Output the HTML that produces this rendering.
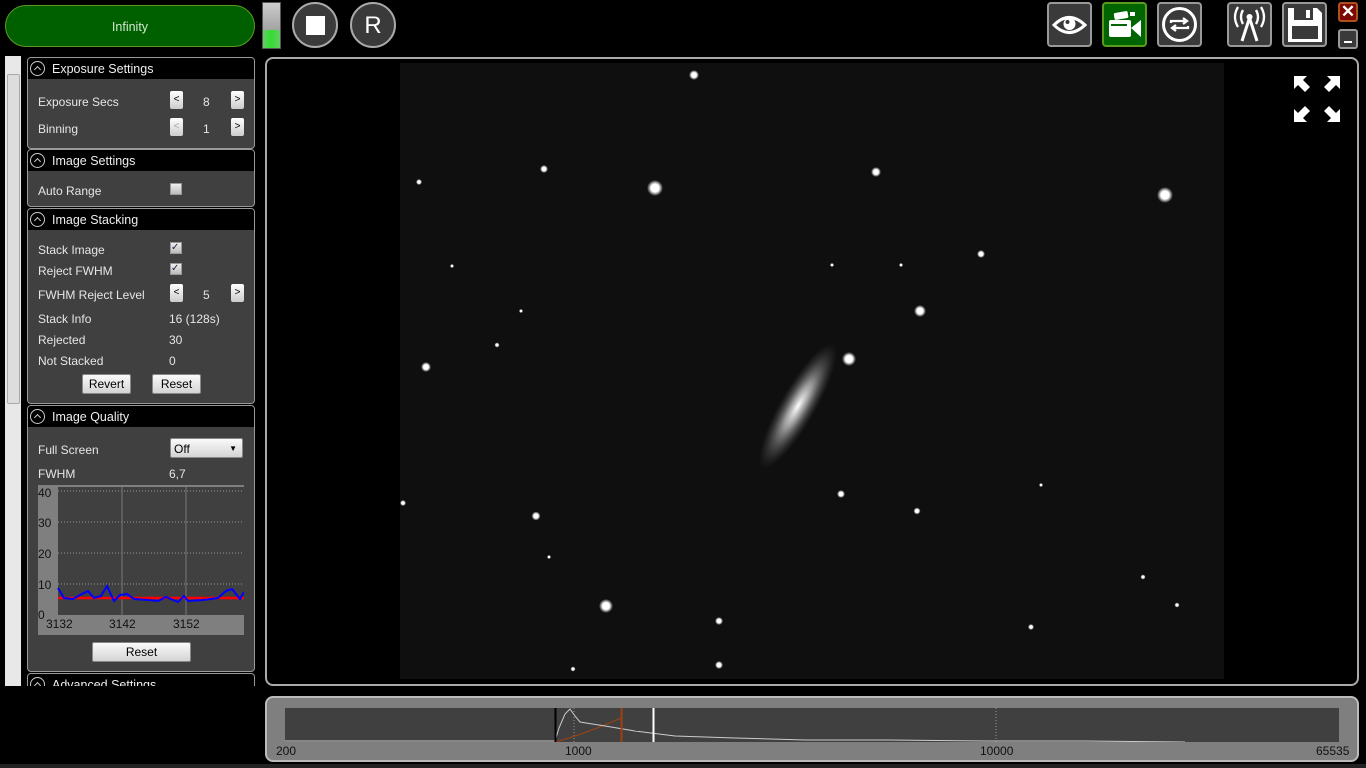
<!DOCTYPE html><html><head><style>
body{margin:0;width:1366px;height:768px;background:#000;position:relative;overflow:hidden;font-family:"Liberation Sans",sans-serif;font-size:12px;color:#ddd}
.a{position:absolute}
.hdr{position:absolute;left:0;width:226px;height:21px;background:#000;color:#eee;font-size:12.5px;line-height:22px}
.hdr i{position:absolute;left:2px;top:3px;width:15px;height:15px;border:1.3px solid #ccc;border-radius:50%;box-sizing:border-box}
.hdr i:after{content:"";position:absolute;left:4px;top:5px;width:4px;height:4px;border-left:1.3px solid #ccc;border-top:1.3px solid #ccc;transform:rotate(45deg)}
.hdr span{position:absolute;left:24px}
.sec{position:absolute;left:27px;width:228px;background:#404040;border:1px solid #999;border-radius:4px;box-sizing:border-box;overflow:hidden}
.l{position:absolute;left:10px;font-size:12px;color:#e6e6e6}
.btn{position:absolute;width:13px;height:18px;background:linear-gradient(#fff,#ccc);border-radius:2px;color:#000;font-size:10px;text-align:center;line-height:18px}
.pb{position:absolute;background:linear-gradient(#fafafa,#d4d4d4);border:1px solid #888;border-radius:2px;color:#000;text-align:center;font-size:12px}
.cb{position:absolute;width:10px;height:10px;border:1px solid #999;background:linear-gradient(#eee,#bbb)}
.tb{position:absolute;top:2px;width:45px;height:45px;border:2px solid #999;border-radius:4px;background:#3a3a3a;box-sizing:border-box}
</style></head><body>
<div class="a" style="left:5px;top:5px;width:248px;height:40px;border-radius:21px;background:#006000;border:1.5px solid #5a9a20;color:#cfe8cf;text-align:center;line-height:42px;font-size:12.5px">Infinity</div>
<div class="a" style="left:262px;top:2px;width:19px;height:47px;background:linear-gradient(#ccc,#888);border:1px solid #555;box-sizing:border-box"><div style="position:absolute;bottom:0;left:0;right:0;height:18px;background:linear-gradient(90deg,#6c6,#3d3,#6c6)"></div></div>
<div class="a" style="left:292px;top:2px;width:46px;height:46px;border-radius:50%;border:2px solid #aaa;background:#3a3a3a;box-sizing:border-box"><div style="position:absolute;left:12px;top:12px;width:19px;height:19px;background:#fff"></div></div>
<div class="a" style="left:350px;top:2px;width:46px;height:46px;border-radius:50%;border:2px solid #aaa;background:#3a3a3a;box-sizing:border-box;color:#fff;font-size:24px;text-align:center;line-height:44px">R</div>
<div class="tb" style="left:1047px"><svg width="41" height="41" viewBox="0 0 41 41"><path d="M5 21 Q20 6 36 21 Q20 36 5 21Z" fill="none" stroke="#fff" stroke-width="3"/><circle cx="20.5" cy="20" r="6" fill="#fff"/><circle cx="18.5" cy="18" r="2" fill="#3a3a3a"/></svg></div>
<div class="tb" style="left:1102px;background:#006400;border-color:#5a9a20"><svg width="41" height="41" viewBox="0 0 41 41"><rect x="5" y="16" width="22" height="17" rx="2" fill="#fff"/><rect x="10" y="8" width="14" height="7" rx="1.5" fill="#fff" transform="rotate(-10 17 11)"/><rect x="26" y="8" width="5" height="4" fill="#fff"/><path d="M27 24 L37 16 V33Z" fill="#fff"/><rect x="7" y="20" width="16" height="2" fill="#006400"/></svg></div>
<div class="tb" style="left:1157px"><svg width="41" height="41" viewBox="0 0 41 41"><circle cx="20.5" cy="20.5" r="16" fill="none" stroke="#fff" stroke-width="3"/><path d="M12 19 V17 H27 M24 14 L28 17 L24 20 M29 22 V24 H14 M17 21 L13 24 L17 27" fill="none" stroke="#fff" stroke-width="2.3"/></svg></div>
<div class="tb" style="left:1227px"><svg width="41" height="41" viewBox="0 0 41 41"><circle cx="20.5" cy="13" r="3" fill="#fff"/><path d="M20.5 14 L13 37 M20.5 14 L28 37" stroke="#fff" stroke-width="3"/><path d="M14 6 Q10 13 14 20 M27 6 Q31 13 27 20 M9 3 Q3 13 9 23 M32 3 Q38 13 32 23" fill="none" stroke="#fff" stroke-width="2.3"/></svg></div>
<div class="tb" style="left:1282px"><svg width="41" height="41" viewBox="0 0 41 41"><path d="M4 4 H33 L38 9 V38 H4Z" fill="#fff"/><rect x="10" y="4" width="19" height="12" fill="#3a3a3a"/><rect x="22" y="6" width="4" height="8" fill="#fff"/><rect x="8" y="22" width="26" height="13" fill="#3a3a3a"/></svg></div>
<div class="a" style="left:1338px;top:2px;width:20px;height:20px;background:#7a0a00;border:2px solid #b05020;border-radius:3px;box-sizing:border-box;color:#fff;font-weight:bold;font-size:17px;text-align:center;line-height:16px">✕</div>
<div class="a" style="left:1338px;top:29px;width:20px;height:20px;background:#3a3a3a;border:2px solid #999;border-radius:3px;box-sizing:border-box"><div style="position:absolute;left:4px;top:10px;width:8px;height:2px;background:#fff"></div></div>
<div class="a" style="left:5px;top:56px;width:16px;height:630px;background:#e8e8e8"><div style="position:absolute;left:2px;top:18px;width:11px;height:328px;background:#ddd;border:1px solid #aaa;border-radius:2px"></div></div>
<div class="sec" style="top:57px;height:92px"><div class="hdr" style="top:0"><i></i><span>Exposure Settings</span></div>
<div class="l" style="top:37px">Exposure Secs</div><div class="btn" style="left:142px;top:33px">&lt;</div><div class="l" style="left:175px;top:37px">8</div><div class="btn" style="left:203px;top:33px">&gt;</div>
<div class="l" style="top:64px">Binning</div><div class="btn" style="left:142px;top:60px;color:#aaa">&lt;</div><div class="l" style="left:175px;top:64px">1</div><div class="btn" style="left:203px;top:60px">&gt;</div></div>
<div class="sec" style="top:149px;height:58px"><div class="hdr" style="top:0"><i></i><span>Image Settings</span></div><div class="l" style="top:34px">Auto Range</div><div class="cb" style="left:142px;top:33px"></div></div>
<div class="sec" style="top:208px;height:196px"><div class="hdr" style="top:0"><i></i><span>Image Stacking</span></div>
<div class="l" style="top:34px">Stack Image</div><div class="cb" style="left:142px;top:33px;color:#224;font-size:10px;line-height:10px">✓</div>
<div class="l" style="top:55px">Reject FWHM</div><div class="cb" style="left:142px;top:54px;color:#224;font-size:10px;line-height:10px">✓</div>
<div class="l" style="top:79px">FWHM Reject Level</div><div class="btn" style="left:142px;top:75px">&lt;</div><div class="l" style="left:175px;top:79px">5</div><div class="btn" style="left:203px;top:75px">&gt;</div>
<div class="l" style="top:103px">Stack Info</div><div class="l" style="left:141px;top:103px">16 (128s)</div>
<div class="l" style="top:124px">Rejected</div><div class="l" style="left:141px;top:124px">30</div>
<div class="l" style="top:145px">Not Stacked</div><div class="l" style="left:141px;top:145px">0</div>
<div class="pb" style="left:54px;top:165px;width:47px;height:18px;line-height:18px">Revert</div><div class="pb" style="left:124px;top:165px;width:47px;height:18px;line-height:18px">Reset</div></div>
<div class="sec" style="top:405px;height:267px"><div class="hdr" style="top:0"><i></i><span>Image Quality</span></div>
<div class="l" style="top:37px">Full Screen</div><div class="pb" style="left:142px;top:32px;width:73px;height:20px;line-height:20px;text-align:left;padding-left:3px;box-sizing:border-box">Off<span style="position:absolute;right:5px;font-size:8px">▼</span></div>
<div class="l" style="top:61px">FWHM</div><div class="l" style="left:141px;top:61px">6,7</div>
<svg class="a" style="left:10px;top:79px" width="206" height="150"><rect width="206" height="150" fill="#7f7f7f"/><rect x="20" y="2" width="186" height="128" fill="#404040"/>
<g stroke="#999" stroke-dasharray="1,2"><line x1="20" y1="6" x2="206" y2="6"/><line x1="20" y1="37" x2="206" y2="37"/><line x1="20" y1="68" x2="206" y2="68"/><line x1="20" y1="99" x2="206" y2="99"/></g>
<g stroke="#777"><line x1="84" y1="2" x2="84" y2="130"/><line x1="148" y1="2" x2="148" y2="130"/></g>
<line x1="20" y1="113" x2="206" y2="113" stroke="#f00" stroke-width="2.5"/>
<polyline points="20,103 26,113 35,114 42,110 50,106 56,113 63,111 69,101 76,116 82,110 89,109 96,114 110,115 120,116 128,112 140,117 146,111 150,116 165,115 180,113 188,106 194,104 198,109 202,114 206,107" fill="none" stroke="#00f" stroke-width="2"/>
<g font-size="12" fill="#111"><text x="0" y="12">40</text><text x="0" y="42">30</text><text x="0" y="73">20</text><text x="0" y="104">10</text><text x="0" y="134">0</text><text x="8" y="143">3132</text><text x="71" y="143">3142</text><text x="135" y="143">3152</text></g></svg>
<div class="pb" style="left:64px;top:236px;width:97px;height:18px;line-height:18px">Reset</div></div>
<div class="sec" style="top:673px;height:40px;border-bottom:none"><div class="hdr" style="top:0"><i></i><span>Advanced Settings</span></div></div>
<div class="a" style="left:0;top:686px;width:260px;height:82px;background:#000"></div>
<div class="a" style="left:0;top:764px;width:1366px;height:4px;background:#222"></div>
<div class="a" style="left:265px;top:57px;width:1094px;height:629px;border:2px solid #aaa;border-radius:8px;box-sizing:border-box;background:#000"></div>
<svg class="a" style="left:400px;top:63px" width="824" height="616">
<defs><radialGradient id="s"><stop offset="0" stop-color="#fff"/><stop offset=".5" stop-color="#fff"/><stop offset="1" stop-color="#fff" stop-opacity="0"/></radialGradient>
<radialGradient id="g"><stop offset="0" stop-color="#fff"/><stop offset=".35" stop-color="#bbb" stop-opacity=".8"/><stop offset="1" stop-color="#555" stop-opacity="0"/></radialGradient></defs>
<rect width="824" height="616" fill="#0f0f0f"/>
<ellipse cx="398" cy="343" rx="18" ry="72" fill="url(#g)" transform="rotate(30 398 343)"/>
<g fill="url(#s)">
<circle cx="294" cy="12" r="5"/><circle cx="255" cy="125" r="8"/><circle cx="476" cy="109" r="5"/><circle cx="765" cy="132" r="8"/><circle cx="144" cy="106" r="4"/><circle cx="19" cy="119" r="3"/><circle cx="581" cy="191" r="4"/><circle cx="520" cy="248" r="6"/><circle cx="449" cy="296" r="7"/><circle cx="26" cy="304" r="5"/><circle cx="97" cy="282" r="2.5"/><circle cx="441" cy="431" r="4"/><circle cx="517" cy="448" r="3.5"/><circle cx="136" cy="453" r="4.5"/><circle cx="3" cy="440" r="3"/><circle cx="206" cy="543" r="7"/><circle cx="319" cy="558" r="4"/><circle cx="319" cy="602" r="4"/><circle cx="631" cy="564" r="3"/><circle cx="743" cy="514" r="2.5"/><circle cx="777" cy="542" r="2.5"/><circle cx="173" cy="606" r="2.5"/><circle cx="149" cy="494" r="2"/><circle cx="52" cy="203" r="2"/><circle cx="501" cy="202" r="2"/><circle cx="432" cy="202" r="2"/><circle cx="121" cy="248" r="2"/><circle cx="641" cy="422" r="2"/></g></svg>
<svg class="a" style="left:1293px;top:75px" width="48" height="48"><g fill="#fff"><path d="M1 1 H14 L10 5 L17 12 L12 17 L5 10 L1 14Z"/><path d="M47 1 H34 L38 5 L31 12 L36 17 L43 10 L47 14Z"/><path d="M1 47 H14 L10 43 L17 36 L12 31 L5 38 L1 34Z"/><path d="M47 47 H34 L38 43 L31 36 L36 31 L43 38 L47 34Z"/></g></svg>
<div class="a" style="left:265px;top:696px;width:1094px;height:66px;border:2px solid #bbb;border-radius:8px;background:#7f7f7f;box-sizing:border-box"></div>
<svg class="a" style="left:285px;top:708px" width="1054" height="34"><rect width="1054" height="34" fill="#404040"/>
<line x1="0" y1="33" x2="270" y2="33" stroke="#ccc"/>
<line x1="289" y1="0" x2="289" y2="34" stroke="#999" stroke-dasharray="1,2"/><line x1="711" y1="0" x2="711" y2="34" stroke="#999" stroke-dasharray="1,2"/>
<path d="M270 34 Q300 26 336 10" fill="none" stroke="#a04010"/>
<polyline points="270,33 274,20 280,6 285,1 290,8 295,14 320,18 350,23 390,28 450,30 520,32 600,32 700,33 800,33 900,34" fill="none" stroke="#ccc"/>
<line x1="270.5" y1="0" x2="270.5" y2="34" stroke="#000" stroke-width="2"/><line x1="336.5" y1="0" x2="336.5" y2="34" stroke="#a04010" stroke-width="2"/><line x1="368.5" y1="0" x2="368.5" y2="34" stroke="#fff" stroke-width="2"/></svg>
<div class="a" style="left:276px;top:744px;color:#111;font-size:12px">200</div>
<div class="a" style="left:565px;top:744px;color:#111;font-size:12px">1000</div>
<div class="a" style="left:980px;top:744px;color:#111;font-size:12px">10000</div>
<div class="a" style="left:1316px;top:744px;color:#111;font-size:12px">65535</div>
</body></html>
